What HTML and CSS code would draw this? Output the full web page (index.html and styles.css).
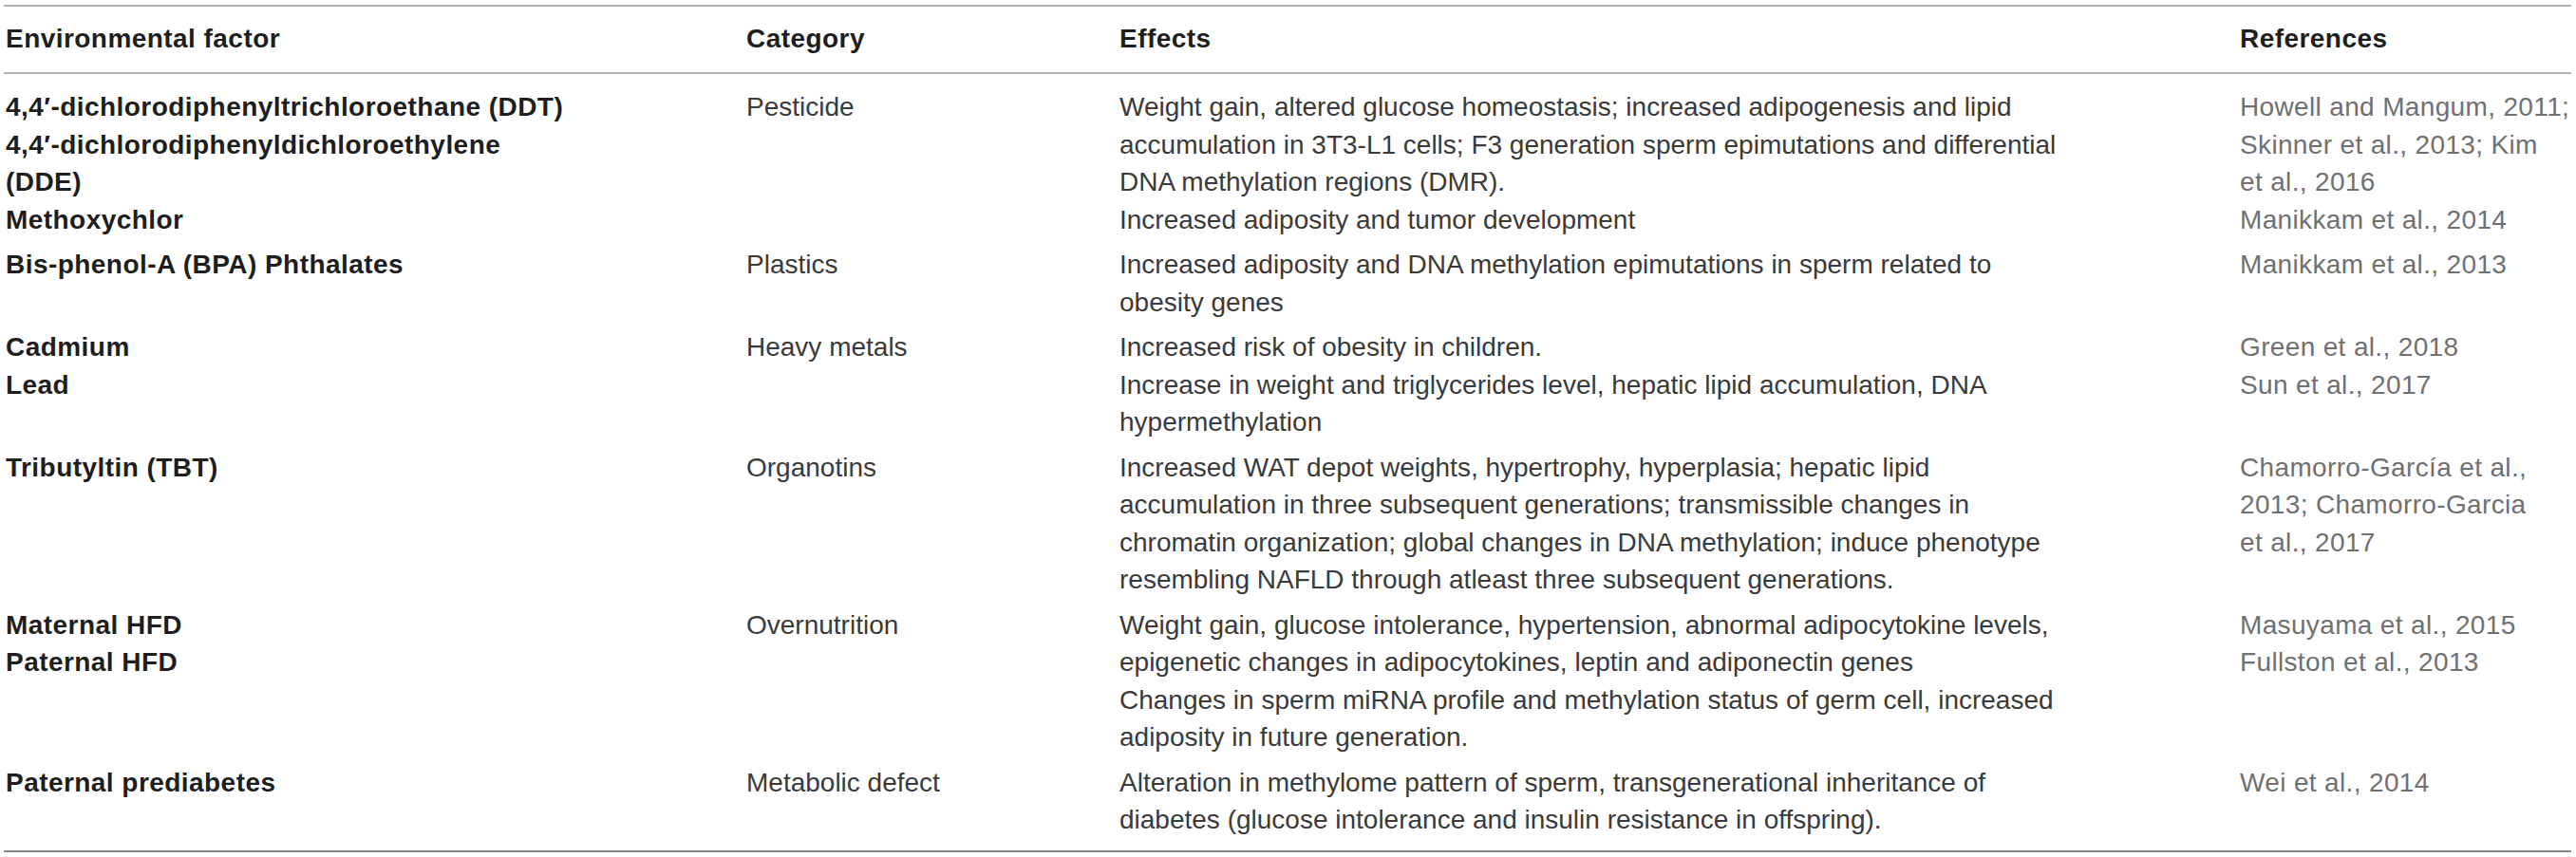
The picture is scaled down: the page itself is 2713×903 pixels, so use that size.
FILE: index.html
```html
<!DOCTYPE html>
<html lang="en">
<head>
<meta charset="utf-8">
<title>Environmental factors</title>
<link rel="stylesheet" href="styles.css">
</head>
<body>
<table class="factors">
  <colgroup>
    <col class="c-factor">
    <col class="c-cat">
    <col class="c-effects">
    <col class="c-refs">
  </colgroup>
  <thead>
    <tr>
      <th>Environmental factor</th>
      <th>Category</th>
      <th>Effects</th>
      <th>References</th>
    </tr>
  </thead>
  <tbody>
    <tr>
      <td class="factor">4,4′-dichlorodiphenyltrichloroethane (DDT)<br>4,4′-dichlorodiphenyldichloroethylene<br>(DDE)<br>Methoxychlor</td>
      <td class="cat">Pesticide</td>
      <td class="eff">Weight gain, altered glucose homeostasis; increased adipogenesis and lipid<br>accumulation in 3T3-L1 cells; F3 generation sperm epimutations and differential<br>DNA methylation regions (DMR).<br>Increased adiposity and tumor development</td>
      <td class="ref">Howell and Mangum, 2011;<br>Skinner et al., 2013; Kim<br>et al., 2016<br>Manikkam et al., 2014</td>
    </tr>
    <tr>
      <td class="factor">Bis-phenol-A (BPA) Phthalates</td>
      <td class="cat">Plastics</td>
      <td class="eff">Increased adiposity and DNA methylation epimutations in sperm related to<br>obesity genes</td>
      <td class="ref">Manikkam et al., 2013</td>
    </tr>
    <tr>
      <td class="factor">Cadmium<br>Lead</td>
      <td class="cat">Heavy metals</td>
      <td class="eff">Increased risk of obesity in children.<br>Increase in weight and triglycerides level, hepatic lipid accumulation, DNA<br>hypermethylation</td>
      <td class="ref">Green et al., 2018<br>Sun et al., 2017</td>
    </tr>
    <tr>
      <td class="factor">Tributyltin (TBT)</td>
      <td class="cat">Organotins</td>
      <td class="eff">Increased WAT depot weights, hypertrophy, hyperplasia; hepatic lipid<br>accumulation in three subsequent generations; transmissible changes in<br>chromatin organization; global changes in DNA methylation; induce phenotype<br>resembling NAFLD through atleast three subsequent generations.</td>
      <td class="ref">Chamorro-García et al.,<br>2013; Chamorro-Garcia<br>et al., 2017</td>
    </tr>
    <tr>
      <td class="factor">Maternal HFD<br>Paternal HFD</td>
      <td class="cat">Overnutrition</td>
      <td class="eff">Weight gain, glucose intolerance, hypertension, abnormal adipocytokine levels,<br>epigenetic changes in adipocytokines, leptin and adiponectin genes<br>Changes in sperm miRNA profile and methylation status of germ cell, increased<br>adiposity in future generation.</td>
      <td class="ref">Masuyama et al., 2015<br>Fullston et al., 2013</td>
    </tr>
    <tr class="last">
      <td class="factor">Paternal prediabetes</td>
      <td class="cat">Metabolic defect</td>
      <td class="eff">Alteration in methylome pattern of sperm, transgenerational inheritance of<br>diabetes (glucose intolerance and insulin resistance in offspring).</td>
      <td class="ref">Wei et al., 2014</td>
    </tr>
  </tbody>
</table>
</body>
</html>
```

FILE: styles.css
```css
html, body {
  margin: 0;
  padding: 0;
  background: #ffffff;
}

body {
  font-family: "Liberation Sans", Arial, sans-serif;
  font-size: 28px;
  line-height: 39.5px;
  color: #333333;
}

.factors {
  margin: 5px 0 0 4px;
  width: 2704px;
  table-layout: fixed;
  border-collapse: separate;
  border-spacing: 0;
}

.c-factor { width: 780px; }
.c-cat { width: 393px; }
.c-effects { width: 1180px; }
.c-refs { width: 351px; }

.factors th,
.factors td {
  text-align: left;
  vertical-align: top;
  white-space: nowrap;
  padding: 8px 0 0 2px;
}

.factors th {
  font-weight: bold;
  letter-spacing: 0.45px;
  color: #1e1e1e;
  border-top: 2px solid #b4b4b4;
  border-bottom: 2px solid #b4b4b4;
  padding-top: 14px;
  padding-bottom: 15.5px;
}

.factors tbody tr:first-child td {
  padding-top: 15px;
}

.factors tr.last td {
  padding-bottom: 12.5px;
  border-bottom: 2px solid #858585;
}

.factor {
  font-weight: bold;
  letter-spacing: 0.45px;
  color: #1e1e1e;
}

.cat,
.eff {
  color: #3a3a3a;
}

.ref {
  color: #707070;
  letter-spacing: 0.35px;
}
```
